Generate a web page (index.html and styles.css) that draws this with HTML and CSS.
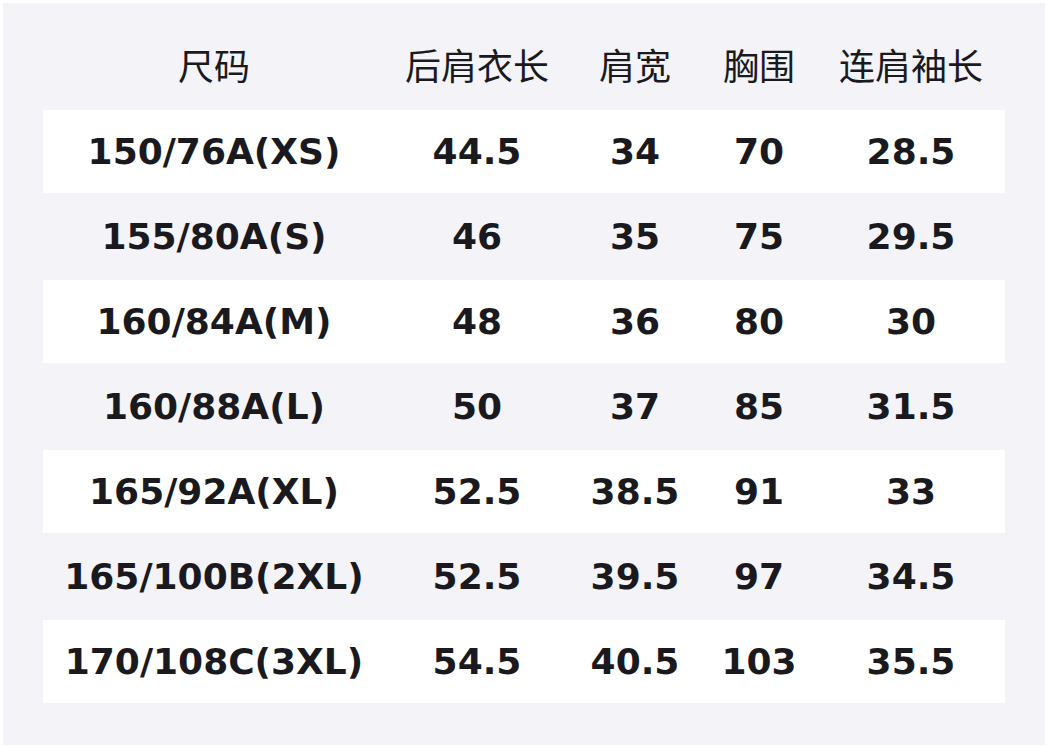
FILE: index.html
```html
<!DOCTYPE html>
<html lang="zh">
<head>
<meta charset="utf-8">
<title>尺码表</title>
<link rel="stylesheet" href="styles.css">
</head>
<body>
<div class="sheet">
  <div class="table">
    <div class="row head">
      <div class="cell">尺码</div>
      <div class="cell">后肩衣长</div>
      <div class="cell">肩宽</div>
      <div class="cell">胸围</div>
      <div class="cell">连肩袖长</div>
    </div>
    <div class="row white">
      <div class="cell">150/76A(XS)</div><div class="cell">44.5</div><div class="cell">34</div><div class="cell">70</div><div class="cell">28.5</div>
    </div>
    <div class="row">
      <div class="cell">155/80A(S)</div><div class="cell">46</div><div class="cell">35</div><div class="cell">75</div><div class="cell">29.5</div>
    </div>
    <div class="row white">
      <div class="cell">160/84A(M)</div><div class="cell">48</div><div class="cell">36</div><div class="cell">80</div><div class="cell">30</div>
    </div>
    <div class="row">
      <div class="cell">160/88A(L)</div><div class="cell">50</div><div class="cell">37</div><div class="cell">85</div><div class="cell">31.5</div>
    </div>
    <div class="row white">
      <div class="cell">165/92A(XL)</div><div class="cell">52.5</div><div class="cell">38.5</div><div class="cell">91</div><div class="cell">33</div>
    </div>
    <div class="row">
      <div class="cell">165/100B(2XL)</div><div class="cell">52.5</div><div class="cell">39.5</div><div class="cell">97</div><div class="cell">34.5</div>
    </div>
    <div class="row white">
      <div class="cell">170/108C(3XL)</div><div class="cell">54.5</div><div class="cell">40.5</div><div class="cell">103</div><div class="cell">35.5</div>
    </div>
  </div>
</div>
</body>
</html>
```

FILE: styles.css
```css
html, body {
  margin: 0;
  padding: 0;
  background: #ffffff;
}

body {
  width: 1048px;
  height: 748px;
  overflow: hidden;
}

.sheet {
  margin: 3px 3px 0 3px;
  width: 1042px;
  height: 742px;
  background: #f3f3f8;
  padding: 22px 40px 0 40px;
  box-sizing: border-box;
}

.table {
  display: flex;
  flex-direction: column;
}

.row {
  display: grid;
  grid-template-columns: 342px 184px 132px 116px 188px;
  height: 83px;
  margin: 1px 0;
  color: #1a1a1e;
  font-family: "DejaVu Sans", "Noto Sans CJK SC", sans-serif;
  font-weight: 700;
  font-size: 36px;
}

.row.head {
  height: 84px;
  margin: 0;
  font-family: "Noto Sans CJK SC", "DejaVu Sans", sans-serif;
  font-weight: 400;
  font-size: 36px;
}

.row.head .cell {
  padding-bottom: 6px;
  box-sizing: border-box;
}

.row.white {
  background: #ffffff;
}

.cell {
  display: flex;
  align-items: center;
  justify-content: center;
  white-space: nowrap;
}
```
